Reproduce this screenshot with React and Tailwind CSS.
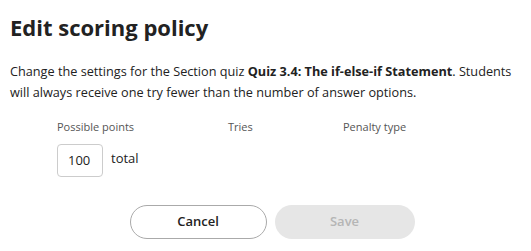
import React from 'react';

const font = { fontFamily: '"Open Sans", "Liberation Sans", sans-serif' };

export default function App() {
  return (
    <div className="w-[531px] h-[251px] bg-white text-[#1f1f1f] overflow-hidden" style={font}>
      <div className="pl-[10px] pr-[6px] pt-[12px]">
        <h1 className="text-[22px] font-bold leading-[30px] text-[#222]">Edit scoring policy</h1>
        <p className="mt-[19px] text-[12.7px] leading-[21px] text-[#222]">
          Change the settings for the Section quiz <b>Quiz 3.4: The if-else-if Statement</b>. Students will always receive one try fewer than the number of answer options.
        </p>

        {/* Policy fields */}
        <div className="mt-[16px] ml-[47px] flex text-[11px] leading-[16px] text-[#555]">
          <div className="w-[171px]">Possible points</div>
          <div className="w-[115px]">Tries</div>
          <div>Penalty type</div>
        </div>
        <div className="mt-[9px] ml-[47px] flex items-center gap-[8px]">
          <div className="w-[46px] h-[33px] border border-[#ccc] rounded-[4px] flex items-center pl-[10px] text-[13px] text-[#222]">
            100
          </div>
          <span className="text-[13px] text-[#222] -mt-[4px]">total</span>
        </div>

        <div className="mt-[28px] flex justify-center gap-[8px] pl-[9px]">
          <button className="w-[137px] h-[34px] rounded-full border border-[#aaa] bg-white text-[13px] font-semibold text-[#222]">
            Cancel
          </button>
          <button className="w-[140px] h-[34px] rounded-full bg-[#e6e6e6] text-[13px] font-semibold text-[#b5b5b5]">
            Save
          </button>
        </div>
      </div>
    </div>
  );
}
